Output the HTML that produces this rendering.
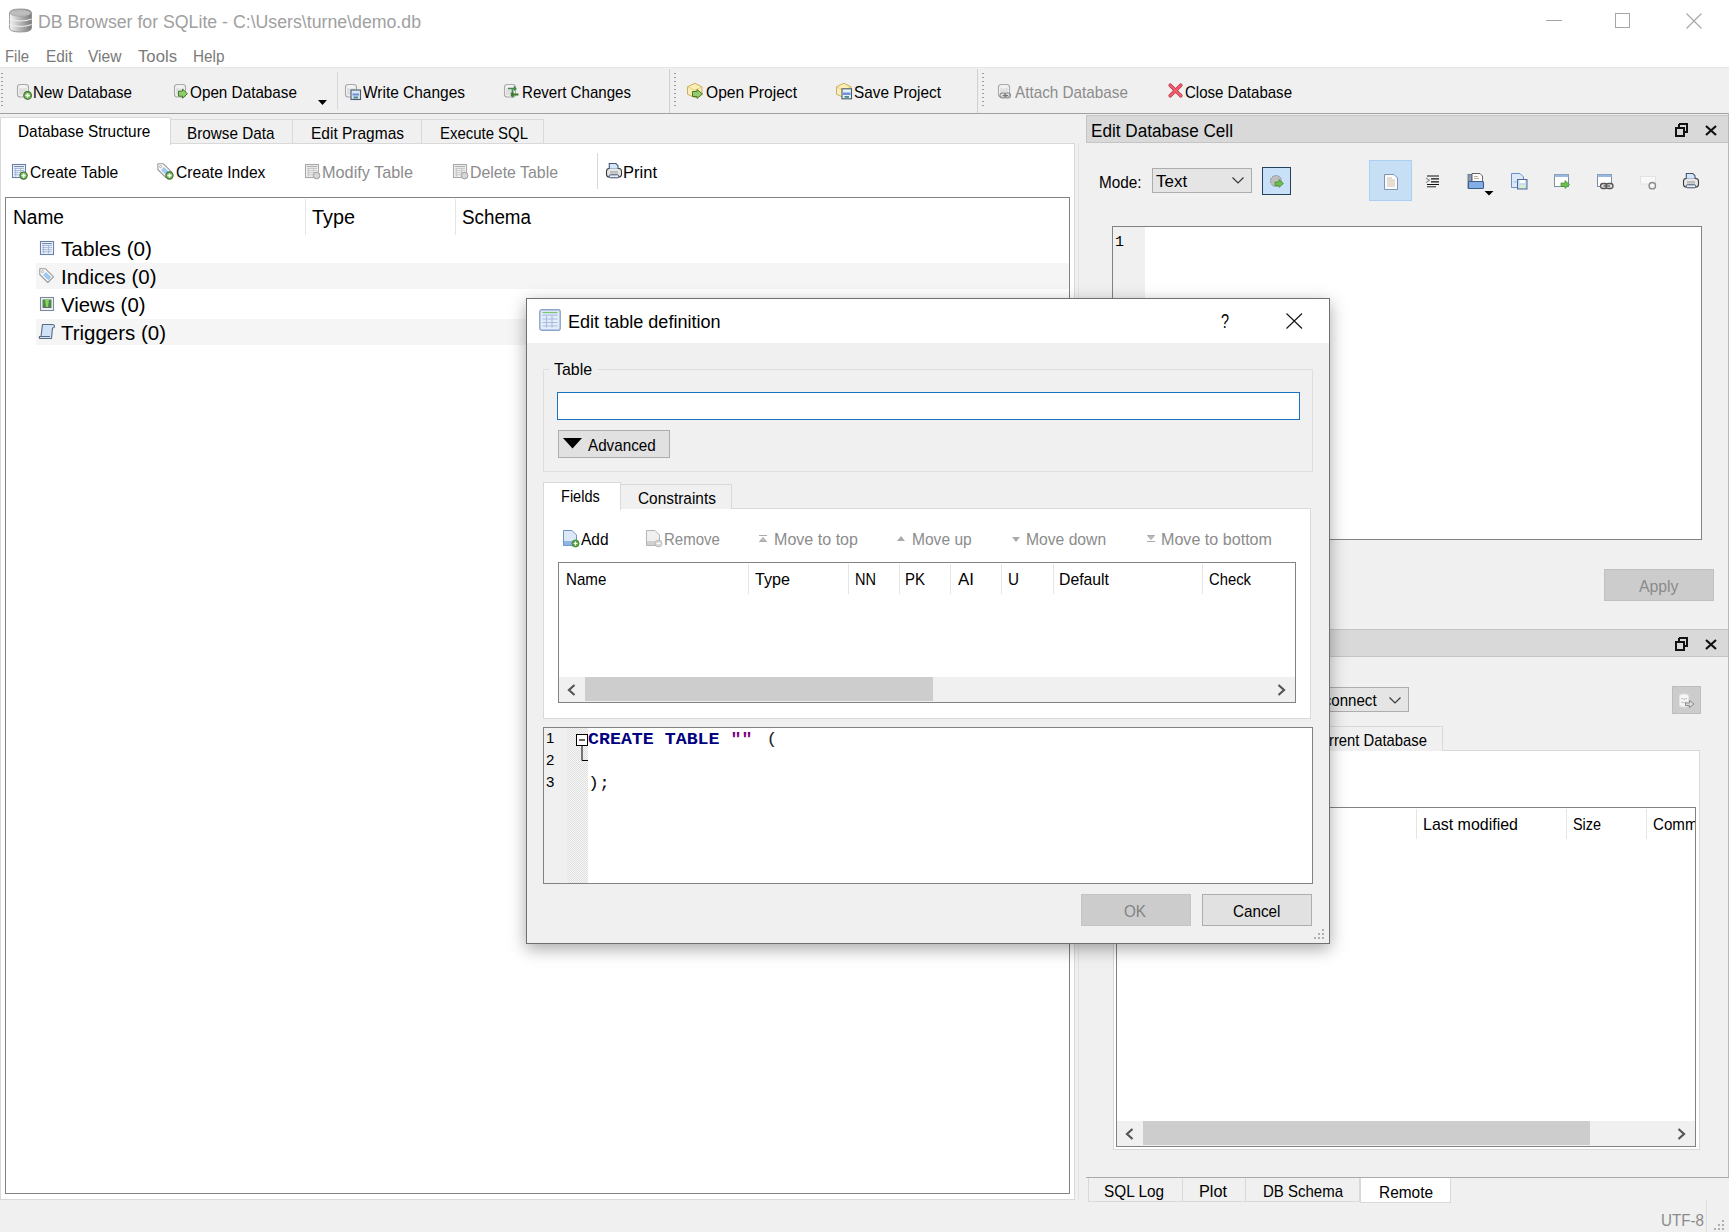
<!DOCTYPE html>
<html><head><meta charset="utf-8">
<style>
*{box-sizing:border-box;margin:0;padding:0}
html,body{width:1729px;height:1232px;overflow:hidden;background:#f0f0f0;font-family:"Liberation Sans",sans-serif;color:#000;position:relative}
.a{position:absolute}
.t{position:absolute;line-height:1;white-space:pre;font-family:"Liberation Sans",sans-serif;transform-origin:0 0}
svg{position:absolute;overflow:visible}
</style></head><body>
<div class="a" style="left:0px;top:0px;width:1729px;height:67px;background:#ffffff;"></div>
<div class="a" style="left:0px;top:67px;width:1729px;height:1px;background:#e6e6e6;"></div>
<svg style="left:8px;top:8px" width="25" height="25" viewBox="0 0 25 25"><defs><linearGradient id="dbg" x1="0" x2="1"><stop offset="0" stop-color="#f4f4f4"/><stop offset="0.35" stop-color="#c8c8c8"/><stop offset="1" stop-color="#7a7a7a"/></linearGradient></defs>
 <path d="M1.5 5 Q1.5 1 12.5 1 Q23.5 1 23.5 5 L23.5 20 Q23.5 24 12.5 24 Q1.5 24 1.5 20 Z" fill="url(#dbg)" stroke="#888" stroke-width="0.8"/>
 <ellipse cx="12.5" cy="5" rx="10.5" ry="3.3" fill="#bdbdbd" stroke="#999" stroke-width="0.6"/>
 <path d="M1.5 11 Q12.5 15 23.5 11" stroke="#eee" stroke-width="1.2" fill="none"/>
 <path d="M1.5 16.5 Q12.5 20.5 23.5 16.5" stroke="#eee" stroke-width="1.2" fill="none"/></svg>
<div class="t" style="left:38px;top:13px;font-size:18px;color:#a0a0a0;transform:scaleX(0.9842);">DB Browser for SQLite - C:\Users\turne\demo.db</div>
<div class="a" style="left:1546px;top:20px;width:16px;height:1px;background:#a6a6a6;"></div>
<div class="a" style="left:1615px;top:13px;width:15px;height:15px;border:1px solid #a6a6a6;"></div>
<svg style="left:1686px;top:13px" width="16" height="16" viewBox="0 0 16 16"><path d="M0.5 0.5 L15.5 15.5 M15.5 0.5 L0.5 15.5" stroke="#a6a6a6" stroke-width="1.1"/></svg>
<div class="t" style="left:5px;top:48px;font-size:17px;color:#7a7a7a;transform:scaleX(0.8757);">File</div>
<div class="t" style="left:45.5px;top:48px;font-size:17px;color:#7a7a7a;transform:scaleX(0.9045);">Edit</div>
<div class="t" style="left:88px;top:48px;font-size:17px;color:#7a7a7a;transform:scaleX(0.9166);">View</div>
<div class="t" style="left:137.5px;top:48px;font-size:17px;color:#7a7a7a;transform:scaleX(0.9827);">Tools</div>
<div class="t" style="left:193px;top:48px;font-size:17px;color:#7a7a7a;transform:scaleX(0.9008);">Help</div>
<div class="a" style="left:0px;top:113px;width:1729px;height:1px;background:#a0a0a0;"></div>
<div class="a" style="left:1px;top:73px;width:2px;height:36px;background:repeating-linear-gradient(#9a9a9a 0 1.5px,transparent 1.5px 4px);"></div>
<div class="a" style="left:337px;top:72px;width:1px;height:38px;background:#d8d8d8;"></div>
<div class="a" style="left:669px;top:69px;width:1px;height:44px;background:#d0d0d0;"></div>
<div class="a" style="left:674px;top:73px;width:2px;height:36px;background:repeating-linear-gradient(#9a9a9a 0 1.5px,transparent 1.5px 4px);"></div>
<div class="a" style="left:977px;top:69px;width:1px;height:44px;background:#d0d0d0;"></div>
<div class="a" style="left:982px;top:73px;width:2px;height:36px;background:repeating-linear-gradient(#9a9a9a 0 1.5px,transparent 1.5px 4px);"></div>
<svg style="left:16px;top:83px" width="18" height="18" viewBox="0 0 18 18"><rect x="1.5" y="1.5" width="11" height="12.5" rx="3" ry="2.6" fill="#f2f2f2" stroke="#a9a9a9" stroke-width="1.1"/><path d="M3 4.5 Q7 6.5 11 4.5 L11 11.5 Q7 13 3 11.5 Z" fill="#d9d9d9" opacity="0.8"/><circle cx="11.6" cy="12.4" r="3.8" fill="#7dbb62" stroke="#3a6a2a" stroke-width="1.1"/><path d="M9.4 12.4 H13.8 M11.6 10.2 V14.6" stroke="#f4fff0" stroke-width="1.5"/></svg>
<div class="t" style="left:33px;top:84px;font-size:17px;color:#000;transform:scaleX(0.8878);">New Database</div>
<svg style="left:173px;top:83px" width="18" height="18" viewBox="0 0 18 18"><rect x="1.5" y="1.5" width="11" height="12.5" rx="3" ry="2.6" fill="#f2f2f2" stroke="#a9a9a9" stroke-width="1.1"/><path d="M3 4.5 Q7 6.5 11 4.5 L11 11.5 Q7 13 3 11.5 Z" fill="#d9d9d9" opacity="0.8"/><path d="M5.5 8.2 H9.5 V6 L14.3 10.8 L9.5 15.2 V13.2 H5.5 Z" fill="#8fcf6a" stroke="#3d7a2a" stroke-width="1"/></svg>
<div class="t" style="left:190px;top:84px;font-size:17px;color:#000;transform:scaleX(0.8985);">Open Database</div>
<svg style="left:318px;top:100px" width="9" height="5" viewBox="0 0 9 5"><path d="M0 0 L9 0 L4.5 5Z" fill="#000"/></svg>
<svg style="left:344px;top:82.5px" width="18" height="18" viewBox="0 0 18 18"><rect x="1.5" y="1.5" width="11" height="12.5" rx="3" ry="2.6" fill="#f2f2f2" stroke="#a9a9a9" stroke-width="1.1"/><path d="M3 4.5 Q7 6.5 11 4.5 L11 11.5 Q7 13 3 11.5 Z" fill="#d9d9d9" opacity="0.8"/><rect x="7" y="7" width="9.5" height="9.5" fill="#d8e6f8" stroke="#4d5a6a" stroke-width="1.1"/><rect x="8.5" y="10.5" width="6.5" height="2" fill="#6f90c8"/><rect x="9.5" y="13.5" width="4.5" height="2" fill="#4a8a8a"/></svg>
<div class="t" style="left:363px;top:84px;font-size:17px;color:#000;transform:scaleX(0.9096);">Write Changes</div>
<svg style="left:503px;top:82.5px" width="18" height="18" viewBox="0 0 18 18"><rect x="1.5" y="1.5" width="11" height="12.5" rx="3" ry="2.6" fill="#f2f2f2" stroke="#a9a9a9" stroke-width="1.1"/><path d="M3 4.5 Q7 6.5 11 4.5 L11 11.5 Q7 13 3 11.5 Z" fill="#d9d9d9" opacity="0.8"/><path d="M5 5.5 H12.5 L11 3.5 M12.5 5.5 L11 7.5" stroke="#4a8a4a" stroke-width="1.6" fill="none"/><path d="M9.5 6 V14.5" stroke="#3d9a5a" stroke-width="1.8"/><path d="M8 11.5 H15.5 M8 11.5 L10 9.5 M8 11.5 L10 13.5" stroke="#3a7a2a" stroke-width="1.8" fill="none"/></svg>
<div class="t" style="left:522px;top:84px;font-size:17px;color:#000;transform:scaleX(0.8873);">Revert Changes</div>
<svg style="left:686px;top:82px" width="19" height="19" viewBox="0 0 19 19"><path d="M8.8 1.3 L16 4.8 L16 12.2 L8.8 15.7 L1.5 12.2 L1.5 4.8 Z" fill="#fbeeb4" stroke="#c9ae62" stroke-width="1"/><path d="M1.5 4.8 L8.8 8.3 L16 4.8 M8.8 8.3 V15.7" stroke="#e0c070" stroke-width="0.7" fill="none"/><path d="M6.5 9.5 H11 V7.5 L16.5 12 L11 16.5 V14.5 H6.5 Z" fill="#93cc70" stroke="#4d7a22" stroke-width="1"/></svg>
<div class="t" style="left:705.5px;top:84px;font-size:17px;color:#000;transform:scaleX(0.9170);">Open Project</div>
<svg style="left:834.5px;top:82px" width="19" height="19" viewBox="0 0 19 19"><path d="M8.8 1.3 L16 4.8 L16 12.2 L8.8 15.7 L1.5 12.2 L1.5 4.8 Z" fill="#fbeeb4" stroke="#c9ae62" stroke-width="1"/><path d="M1.5 4.8 L8.8 8.3 L16 4.8 M8.8 8.3 V15.7" stroke="#e0c070" stroke-width="0.7" fill="none"/><rect x="7" y="6.8" width="9.5" height="10" fill="#e6f4f8" stroke="#4d5a6a" stroke-width="1.1"/><rect x="8" y="10.5" width="7.5" height="2.5" fill="#6f90d8"/><rect x="9.5" y="14" width="4.5" height="1.8" fill="#4a8a8a"/></svg>
<div class="t" style="left:854px;top:84px;font-size:17px;color:#000;transform:scaleX(0.9026);">Save Project</div>
<svg style="left:997px;top:82.5px" width="18" height="18" viewBox="0 0 18 18"><rect x="1.5" y="1.5" width="11" height="12.5" rx="3" ry="2.6" fill="#f2f2f2" stroke="#a9a9a9" stroke-width="1.1"/><path d="M3 4.5 Q7 6.5 11 4.5 L11 11.5 Q7 13 3 11.5 Z" fill="#d9d9d9" opacity="0.8"/><rect x="3" y="10" width="6" height="5" rx="2.4" fill="none" stroke="#8a8a8a" stroke-width="1.1"/><rect x="7.5" y="10" width="6" height="5" rx="2.4" fill="none" stroke="#8a8a8a" stroke-width="1.1"/><path d="M5.5 12.5 H11" stroke="#777" stroke-width="1"/></svg>
<div class="t" style="left:1014.5px;top:84px;font-size:17px;color:#8c8c8c;transform:scaleX(0.8989);">Attach Database</div>
<svg style="left:1167.5px;top:83px" width="15" height="15" viewBox="0 0 15 15"><path d="M2.2 2.2 L12.8 12.8 M12.8 2.2 L2.2 12.8" stroke="#b83a4a" stroke-width="3.6" stroke-linecap="round"/><path d="M2.2 2.2 L12.8 12.8 M12.8 2.2 L2.2 12.8" stroke="#f25c6e" stroke-width="2.2" stroke-linecap="round"/></svg>
<div class="t" style="left:1185px;top:84px;font-size:17px;color:#000;transform:scaleX(0.8845);">Close Database</div>
<div class="a" style="left:170px;top:119px;width:123px;height:25px;background:#f0f0f0;border:1px solid #d9d9d9;border-bottom:none;"></div>
<div class="a" style="left:292px;top:119px;width:130px;height:25px;background:#f0f0f0;border:1px solid #d9d9d9;border-bottom:none;"></div>
<div class="a" style="left:421px;top:119px;width:123px;height:25px;background:#f0f0f0;border:1px solid #d9d9d9;border-bottom:none;"></div>
<div class="a" style="left:0px;top:143px;width:1075px;height:1057px;background:#ffffff;border:1px solid #d9d9d9;"></div>
<div class="a" style="left:0px;top:117px;width:171px;height:28px;background:#ffffff;border:1px solid #d9d9d9;border-bottom:none;"></div>
<div class="t" style="left:18.3px;top:123px;font-size:17px;color:#000;transform:scaleX(0.9033);">Database Structure</div>
<div class="t" style="left:187.4px;top:125px;font-size:17px;color:#000;transform:scaleX(0.8980);">Browse Data</div>
<div class="t" style="left:311px;top:125px;font-size:17px;color:#000;transform:scaleX(0.9113);">Edit Pragmas</div>
<div class="t" style="left:440px;top:125px;font-size:17px;color:#000;transform:scaleX(0.8785);">Execute SQL</div>
<svg style="left:11.0px;top:163.0px" width="17.0" height="17.0" viewBox="0 0 17 17"><rect x="1.5" y="1.5" width="13" height="13" fill="#eef5fd" stroke="#6c7fa6" stroke-width="1.1"/><path d="M3 3.6 H13" stroke="#6c7fa6" stroke-width="1"/><path d="M3 5.5 H13" stroke="#9fb4d6" stroke-width="0.9"/><path d="M3 7.6 H13" stroke="#9fb4d6" stroke-width="0.9"/><path d="M3 9.7 H13" stroke="#9fb4d6" stroke-width="0.9"/><path d="M3 11.8 H13" stroke="#9fb4d6" stroke-width="0.9"/><path d="M4.6 5 V13.5 M9.6 5 V13.5" stroke="#9fb4d6" stroke-width="0.9"/><circle cx="12.6" cy="12.6" r="3.6" fill="#7dbb62" stroke="#3a6a2a" stroke-width="1.1"/><path d="M10.5 12.6 H14.7 M12.6 10.5 V14.7" stroke="#f4fff0" stroke-width="1.5"/></svg>
<div class="t" style="left:29.6px;top:164px;font-size:17px;color:#000;transform:scaleX(0.9189);">Create Table</div>
<svg style="left:156px;top:162px" width="18" height="18" viewBox="0 0 18 18"><path d="M1.8 1.8 H7.5 L15.5 9.8 L9.8 15.5 L1.8 7.5 Z" fill="#f8fbff" stroke="#9a9a9a" stroke-width="1.1" stroke-linejoin="round"/><path d="M8 5.5 L12.8 10.3 L10.3 12.8 L5.5 8 Z" fill="#9ccaf0" stroke="#7fb0dc" stroke-width="0.6"/><circle cx="4.6" cy="4.6" r="1.1" fill="none" stroke="#b0a090" stroke-width="0.8"/><circle cx="13.5" cy="13.5" r="3.6" fill="#7dbb62" stroke="#3a6a2a" stroke-width="1.1"/><path d="M11.4 13.5 H15.6 M13.5 11.4 V15.6" stroke="#f4fff0" stroke-width="1.5"/></svg>
<div class="t" style="left:175.7px;top:164px;font-size:17px;color:#000;transform:scaleX(0.9184);">Create Index</div>
<svg style="left:304.0px;top:163.0px" width="17.0" height="17.0" viewBox="0 0 17 17"><rect x="1.5" y="1.5" width="13" height="13" fill="#f0f0f0" stroke="#a8a8a8" stroke-width="1.1"/><path d="M3 3.6 H13" stroke="#a8a8a8" stroke-width="1"/><path d="M3 5.5 H13" stroke="#c4c4c4" stroke-width="0.9"/><path d="M3 7.6 H13" stroke="#c4c4c4" stroke-width="0.9"/><path d="M3 9.7 H13" stroke="#c4c4c4" stroke-width="0.9"/><path d="M3 11.8 H13" stroke="#c4c4c4" stroke-width="0.9"/><path d="M4.6 5 V13.5 M9.6 5 V13.5" stroke="#c4c4c4" stroke-width="0.9"/><circle cx="12.6" cy="12.6" r="3.3" fill="#d6d6d6" stroke="#a0a0a0" stroke-width="1"/></svg>
<div class="t" style="left:322px;top:164px;font-size:17px;color:#8c8c8c;transform:scaleX(0.9565);">Modify Table</div>
<svg style="left:452.0px;top:163.0px" width="17.0" height="17.0" viewBox="0 0 17 17"><rect x="1.5" y="1.5" width="13" height="13" fill="#f0f0f0" stroke="#a8a8a8" stroke-width="1.1"/><path d="M3 3.6 H13" stroke="#a8a8a8" stroke-width="1"/><path d="M3 5.5 H13" stroke="#c4c4c4" stroke-width="0.9"/><path d="M3 7.6 H13" stroke="#c4c4c4" stroke-width="0.9"/><path d="M3 9.7 H13" stroke="#c4c4c4" stroke-width="0.9"/><path d="M3 11.8 H13" stroke="#c4c4c4" stroke-width="0.9"/><path d="M4.6 5 V13.5 M9.6 5 V13.5" stroke="#c4c4c4" stroke-width="0.9"/><circle cx="12.6" cy="12.6" r="3.3" fill="#d6d6d6" stroke="#a0a0a0" stroke-width="1"/></svg>
<div class="t" style="left:470px;top:164px;font-size:17px;color:#8c8c8c;transform:scaleX(0.9342);">Delete Table</div>
<div class="a" style="left:597px;top:153px;width:1px;height:36px;background:#d8d8d8;"></div>
<svg style="left:605px;top:162px" width="18" height="18" viewBox="0 0 18 18"><rect x="1.5" y="6.5" width="15" height="8.5" rx="2.8" fill="#e6e6e6" stroke="#3a3a3a" stroke-width="1.1"/><path d="M4.3 6.8 V1.5 H10.8 L13 3.7 V6.8" fill="#d4e8fb" stroke="#46566c" stroke-width="1.1"/><rect x="5" y="9" width="8" height="2.6" fill="#bdbdbd"/><rect x="4.3" y="12.8" width="9.4" height="3" rx="1" fill="#e4f0fb" stroke="#46566c" stroke-width="1"/></svg>
<div class="t" style="left:623px;top:164px;font-size:17px;color:#000;transform:scaleX(0.9723);">Print</div>
<div class="a" style="left:5px;top:197px;width:1065px;height:997px;background:#ffffff;border:1px solid #828282;"></div>
<div class="a" style="left:305px;top:199px;width:1px;height:36px;background:#e5e5e5;"></div>
<div class="a" style="left:455px;top:199px;width:1px;height:36px;background:#e5e5e5;"></div>
<div class="t" style="left:12.6px;top:207px;font-size:20px;color:#000;transform:scaleX(0.9558);">Name</div>
<div class="t" style="left:312px;top:207px;font-size:20px;color:#000;transform:scaleX(0.9917);">Type</div>
<div class="t" style="left:462px;top:207px;font-size:20px;color:#000;transform:scaleX(0.9404);">Schema</div>
<div class="a" style="left:36px;top:263px;width:1033px;height:26px;background:#f5f5f5;"></div>
<div class="a" style="left:36px;top:319px;width:1033px;height:26px;background:#f5f5f5;"></div>
<svg style="left:39.0px;top:240.0px" width="17.0" height="17.0" viewBox="0 0 17 17"><rect x="1.5" y="1.5" width="13" height="13" fill="#eef5fd" stroke="#6c7fa6" stroke-width="1.1"/><path d="M3 3.6 H13" stroke="#6c7fa6" stroke-width="1"/><path d="M3 5.5 H13" stroke="#9fb4d6" stroke-width="0.9"/><path d="M3 7.6 H13" stroke="#9fb4d6" stroke-width="0.9"/><path d="M3 9.7 H13" stroke="#9fb4d6" stroke-width="0.9"/><path d="M3 11.8 H13" stroke="#9fb4d6" stroke-width="0.9"/><path d="M4.6 5 V13.5 M9.6 5 V13.5" stroke="#9fb4d6" stroke-width="0.9"/></svg>
<svg style="left:38px;top:267px" width="18" height="18" viewBox="0 0 18 18"><path d="M1.8 1.8 H7.5 L15.5 9.8 L9.8 15.5 L1.8 7.5 Z" fill="#f8fbff" stroke="#9a9a9a" stroke-width="1.1" stroke-linejoin="round"/><path d="M8 5.5 L12.8 10.3 L10.3 12.8 L5.5 8 Z" fill="#9ccaf0" stroke="#7fb0dc" stroke-width="0.6"/><circle cx="4.6" cy="4.6" r="1.1" fill="none" stroke="#b0a090" stroke-width="0.8"/></svg>
<svg style="left:39px;top:296px" width="16" height="16" viewBox="0 0 16 16"><rect x="1.5" y="1.5" width="13" height="13" fill="#eef3f8" stroke="#7f8a98" stroke-width="1.1"/><rect x="3.5" y="3.5" width="9" height="7.5" fill="#4f8a4a"/><path d="M6 3.5 H10 L9 11 H7 Z" fill="#8fd060"/><path d="M3.5 11.5 H12.5" stroke="#555" stroke-width="0.9"/></svg>
<svg style="left:38px;top:323px" width="18" height="18" viewBox="0 0 18 18"><path d="M4.5 1.5 H14.5 Q16.5 1.5 16.5 3.5 Q16.5 5 14.5 5 L13.5 15.5 H2 Q1 15.5 1.5 13.5 L3 13.5 Z" fill="#cfe2f8" stroke="#5a6a80" stroke-width="1.1" stroke-linejoin="round"/><path d="M1.5 13.5 H12" stroke="#5a6a80" stroke-width="1"/></svg>
<div class="t" style="left:61.3px;top:238px;font-size:21px;color:#000;transform:scaleX(0.9870);">Tables (0)</div>
<div class="t" style="left:61.3px;top:266px;font-size:21px;color:#000;transform:scaleX(0.9740);">Indices (0)</div>
<div class="t" style="left:61.3px;top:293.5px;font-size:21px;color:#000;transform:scaleX(0.9697);">Views (0)</div>
<div class="t" style="left:61.3px;top:321.7px;font-size:21px;color:#000;transform:scaleX(0.9745);">Triggers (0)</div>
<div class="a" style="left:1078px;top:143px;width:1px;height:1057px;background:#e3e3e3;"></div>
<div class="a" style="left:1086px;top:115px;width:643px;height:28px;background:#d9d9d9;border:1px solid #c4c4c4;"></div>
<div class="t" style="left:1091px;top:122px;font-size:18px;color:#000;transform:scaleX(0.9524);">Edit Database Cell</div>
<svg style="left:1675px;top:123px" width="13" height="14" viewBox="0 0 13 14"><path d="M4 1 H12 V9 H10 M4 1 V4" stroke="#111" stroke-width="2" fill="none"/><rect x="1" y="5" width="8" height="8" fill="none" stroke="#111" stroke-width="2"/></svg>
<svg style="left:1705px;top:125px" width="12" height="11" viewBox="0 0 12 11"><path d="M1 1 L11 10 M11 1 L1 10" stroke="#111" stroke-width="2.2"/></svg>
<div class="t" style="left:1099.2px;top:174px;font-size:17px;color:#000;transform:scaleX(0.9016);">Mode:</div>
<div class="a" style="left:1152px;top:168px;width:100px;height:25px;background:#e5e5e5;border:1px solid #adadad;"></div>
<div class="t" style="left:1156px;top:173px;font-size:17px;color:#000;">Text</div>
<svg style="left:1232px;top:177px" width="12" height="7" viewBox="0 0 12 7"><path d="M0.5 0.5 L6 6 L11.5 0.5" stroke="#333" stroke-width="1.1" fill="none"/></svg>
<div class="a" style="left:1262px;top:167px;width:29px;height:28px;background:#c9e1f8;border:1px solid #24415e;"></div>
<svg style="left:1268px;top:173px" width="18" height="16" viewBox="0 0 18 16"><circle cx="8" cy="8" r="5.5" fill="#bdbdbd" stroke="#8a8a8a" stroke-dasharray="2 1"/><path d="M7 9 H11 V6.5 L15.5 10.5 L11 14.5 V12.5 H7 Z" fill="#6cbf4e" stroke="#3d8a2e" stroke-width="0.7"/></svg>
<div class="a" style="left:1369px;top:160px;width:43px;height:41px;background:#c6dff5;border:1px solid #a9d0f2;"></div>
<svg style="left:1384px;top:174px" width="14" height="16" viewBox="0 0 14 16"><path d="M0.5 0.5 H10 L13.5 4 V15.5 H0.5 Z" fill="#fafcff" stroke="#7f92b0"/><path d="M3 4 H8 M3 6 H11 M3 8 H11 M3 10 H11 M3 12 H11" stroke="#c8b08a" stroke-width="0.8"/></svg>
<svg style="left:1426px;top:175px" width="14" height="13" viewBox="0 0 14 13"><path d="M1 1 H13 M5 3.8 H13 M5 6.8 H13 M1 9.5 H13" stroke="#111" stroke-width="1.2"/><path d="M1 11.8 H10" stroke="#111" stroke-width="0.9"/><path d="M0 3 L3.5 5.3 L0 7.6" stroke="#888" stroke-width="1.1" fill="none"/></svg>
<svg style="left:1467px;top:172px" width="28" height="24" viewBox="0 0 28 24"><rect x="1" y="2.5" width="4" height="14" fill="#8a9ab0" stroke="#5a6a80" stroke-width="0.8"/><path d="M5 1.5 H13 L15.5 4 V10 H5 Z" fill="#fafafa" stroke="#555" stroke-width="0.9"/><path d="M7 4.5 H11 M7 6.5 H12" stroke="#a09070" stroke-width="0.7"/><rect x="1.5" y="9.5" width="15" height="7" rx="1" fill="#84aee6" stroke="#3c5f8f" stroke-width="1.1"/><path d="M17.5 19 H26.5 L22 23.5 Z" fill="#000"/></svg>
<svg style="left:1510px;top:172px" width="19" height="18" viewBox="0 0 19 18"><path d="M1.5 1.5 H10 L13.5 5 V15.5 H1.5 Z" fill="#dde9f8" stroke="#6a8fc2" stroke-width="1"/><path d="M3.5 10 H7" stroke="#8fb0d8" stroke-width="0.8"/><rect x="7.5" y="7.5" width="9.5" height="9.5" fill="#c8dcf4" stroke="#4a6a98" stroke-width="1"/><rect x="9.5" y="8" width="5.5" height="3" fill="#fff"/><rect x="9.5" y="13" width="5.5" height="3" fill="#d8f0c8"/></svg>
<svg style="left:1554px;top:174px" width="17" height="16" viewBox="0 0 17 16"><rect x="0.5" y="0.5" width="14" height="12" fill="#fff" stroke="#7a8ea8"/><rect x="0.5" y="0.5" width="14" height="2.5" fill="#9bb8de"/><path d="M7 9 H11 V6.5 L15.5 10.5 L11 14.5 V12.5 H7 Z" fill="#6cbf4e" stroke="#3d8a2e" stroke-width="0.7"/></svg>
<svg style="left:1597px;top:174px" width="17" height="16" viewBox="0 0 17 16"><rect x="0.5" y="0.5" width="14" height="12" fill="#fff" stroke="#7a8ea8"/><rect x="0.5" y="0.5" width="14" height="2.5" fill="#9bb8de"/><rect x="3.5" y="9.5" width="7" height="5" rx="2.5" fill="#ddd" stroke="#555" stroke-width="1.3"/><rect x="9" y="9.5" width="7" height="5" rx="2.5" fill="#ddd" stroke="#555" stroke-width="1.3"/><path d="M6.5 12 H13" stroke="#555" stroke-width="1.2"/></svg>
<svg style="left:1640px;top:176px" width="18" height="15" viewBox="0 0 18 15"><rect x="0.5" y="0.5" width="15" height="7.5" fill="#f8f8f8" stroke="#e2e2e2"/><circle cx="12.3" cy="9.7" r="3.2" fill="#eee" stroke="#8a8a8a" stroke-width="1.4"/><path d="M10.8 9.3 H13.8" stroke="#fff" stroke-width="1.2"/></svg>
<svg style="left:1682px;top:172px" width="18" height="18" viewBox="0 0 18 18"><rect x="1.5" y="6.5" width="15" height="8.5" rx="2.8" fill="#e6e6e6" stroke="#3a3a3a" stroke-width="1.1"/><path d="M4.3 6.8 V1.5 H10.8 L13 3.7 V6.8" fill="#d4e8fb" stroke="#46566c" stroke-width="1.1"/><rect x="5" y="9" width="8" height="2.6" fill="#bdbdbd"/><rect x="4.3" y="12.8" width="9.4" height="3" rx="1" fill="#e4f0fb" stroke="#46566c" stroke-width="1"/></svg>
<div class="a" style="left:1112px;top:226px;width:590px;height:314px;background:#ffffff;border:1px solid #828282;"></div>
<div class="a" style="left:1113px;top:227px;width:32px;height:312px;background:#f0f0f0;"></div>
<div class="t" style="left:1115px;top:235px;font-size:15px;color:#000;font-family:'Liberation Mono',monospace;">1</div>
<div class="a" style="left:1604px;top:569px;width:110px;height:32px;background:#cccccc;border:1px solid #c0c0c0;"></div>
<div class="t" style="left:1639px;top:578px;font-size:17px;color:#8a8a8a;transform:scaleX(0.9287);">Apply</div>
<div class="a" style="left:1086px;top:629px;width:643px;height:28px;background:#d9d9d9;border:1px solid #c4c4c4;"></div>
<svg style="left:1675px;top:637px" width="13" height="14" viewBox="0 0 13 14"><path d="M4 1 H12 V9 H10 M4 1 V4" stroke="#111" stroke-width="2" fill="none"/><rect x="1" y="5" width="8" height="8" fill="none" stroke="#111" stroke-width="2"/></svg>
<svg style="left:1705px;top:639px" width="12" height="11" viewBox="0 0 12 11"><path d="M1 1 L11 10 M11 1 L1 10" stroke="#111" stroke-width="2.2"/></svg>
<div class="a" style="left:1300px;top:687px;width:109px;height:25px;background:#e5e5e5;border:1px solid #adadad;"></div>
<div class="t" style="left:1302px;top:692px;font-size:17px;color:#000;transform:scaleX(0.8869);">Disconnect</div>
<svg style="left:1389px;top:697px" width="12" height="7" viewBox="0 0 12 7"><path d="M0.5 0.5 L6 6 L11.5 0.5" stroke="#333" stroke-width="1.1" fill="none"/></svg>
<div class="a" style="left:1672px;top:686px;width:29px;height:28px;background:#cccccc;border:1px solid #bdbdbd;"></div>
<svg style="left:1678px;top:693px" width="18" height="16" viewBox="0 0 18 16"><path d="M1.5 3 Q1.5 1 6 1 Q10.5 1 10.5 3 V12 Q10.5 14 6 14 Q1.5 14 1.5 12 Z" fill="#f6f6f6" stroke="#e4e4e4"/><path d="M3 5.5 Q6 7 9 5.5 M3 9 Q6 10.5 9 9" stroke="#b8b8b8" stroke-width="0.9" fill="none"/><path d="M7.5 10 H11.5 V7.5 L16 11 L11.5 14.5 V12.5 H7.5 Z" fill="#dcdcdc" stroke="#8a8a8a" stroke-width="1"/></svg>
<div class="a" style="left:1113px;top:750px;width:587px;height:400px;background:#ffffff;border:1px solid #d9d9d9;"></div>
<div class="a" style="left:1300px;top:726px;width:143px;height:25px;background:#f0f0f0;border:1px solid #d9d9d9;border-bottom:none;"></div>
<div class="t" style="left:1310px;top:732px;font-size:17px;color:#000;transform:scaleX(0.8719);">Current Database</div>
<div class="a" style="left:1116px;top:807px;width:580px;height:340px;background:#ffffff;border:1px solid #828282;"></div>
<div class="a" style="left:1416px;top:809px;width:1px;height:30px;background:#e5e5e5;"></div>
<div class="a" style="left:1566px;top:809px;width:1px;height:30px;background:#e5e5e5;"></div>
<div class="a" style="left:1646px;top:809px;width:1px;height:30px;background:#e5e5e5;"></div>
<div class="t" style="left:1423px;top:816px;font-size:17px;color:#000;transform:scaleX(0.9394);">Last modified</div>
<div class="t" style="left:1573px;top:816px;font-size:17px;color:#000;transform:scaleX(0.8465);">Size</div>
<div class="a" style="left:1646px;top:809px;width:49px;height:30px;overflow:hidden"><div class="t" style="left:7px;top:7px;font-size:17px;transform:scaleX(0.89)">Comment</div></div>
<div class="a" style="left:1117px;top:1121px;width:578px;height:25px;background:#f0f0f0;"></div>
<div class="a" style="left:1143px;top:1121px;width:447px;height:24px;background:#cdcdcd;"></div>
<svg style="left:1125px;top:1128px" width="9" height="12" viewBox="0 0 9 12"><path d="M7.5 1 L2 6 L7.5 11" stroke="#555" stroke-width="2.2" fill="none"/></svg>
<svg style="left:1677px;top:1128px" width="9" height="12" viewBox="0 0 9 12"><path d="M1.5 1 L7 6 L1.5 11" stroke="#555" stroke-width="2.2" fill="none"/></svg>
<div class="a" style="left:1728px;top:113px;width:1px;height:1065px;background:#b8b8b8;"></div>
<div class="a" style="left:1088px;top:1177px;width:95px;height:25px;background:#f0f0f0;border:1px solid #d9d9d9;border-top:none;"></div>
<div class="a" style="left:1182px;top:1177px;width:64px;height:25px;background:#f0f0f0;border:1px solid #d9d9d9;border-top:none;"></div>
<div class="a" style="left:1245px;top:1177px;width:115px;height:25px;background:#f0f0f0;border:1px solid #d9d9d9;border-top:none;"></div>
<div class="a" style="left:1360px;top:1178px;width:91px;height:25px;background:#ffffff;border:1px solid #d9d9d9;border-top:none;"></div>
<div class="a" style="left:1086px;top:1177px;width:643px;height:1px;background:#ababab;"></div>
<div class="t" style="left:1103.6px;top:1183px;font-size:17px;color:#000;transform:scaleX(0.9025);">SQL Log</div>
<div class="t" style="left:1199px;top:1183px;font-size:17px;color:#000;transform:scaleX(0.9557);">Plot</div>
<div class="t" style="left:1263px;top:1183px;font-size:17px;color:#000;transform:scaleX(0.8820);">DB Schema</div>
<div class="t" style="left:1379px;top:1183.5px;font-size:17px;color:#000;transform:scaleX(0.9071);">Remote</div>
<div class="t" style="left:1661px;top:1212px;font-size:17px;color:#8a8a8a;transform:scaleX(0.8926);">UTF-8</div>
<div class="a" style="left:1706px;top:1200px;width:1px;height:32px;background:#dcdcdc;"></div>
<svg style="left:1712px;top:1218px" width="14" height="14" viewBox="0 0 14 14"><g fill="#b0b0b0"><rect x="10" y="2" width="2" height="2"/><rect x="6" y="6" width="2" height="2"/><rect x="10" y="6" width="2" height="2"/><rect x="2" y="10" width="2" height="2"/><rect x="6" y="10" width="2" height="2"/><rect x="10" y="10" width="2" height="2"/></g></svg>
<div class="a" style="left:526px;top:298px;width:804px;height:646px;box-shadow:0 5px 16px rgba(0,0,0,0.34);background:#f0f0f0;border:1px solid #6f6f6f"></div>
<div class="a" style="left:527px;top:299px;width:802px;height:44px;background:#ffffff;"></div>
<svg style="left:539px;top:309px" width="22" height="22" viewBox="0 0 22 22"><rect x="0.8" y="0.8" width="20.4" height="20.4" rx="2" fill="#e4edf9" stroke="#8aa4cc" stroke-width="1.4"/><path d="M3.5 3.5 H18.5" stroke="#7cc46a" stroke-width="1.2"/><path d="M3.5 6.5 H18.5 M3.5 10 H18.5 M3.5 13.5 H18.5 M3.5 17 H18.5 M7.5 6.5 V18.5 M13 6.5 V18.5" stroke="#a8bde0" stroke-width="1.1"/><rect x="3.5" y="4.5" width="15" height="2" fill="#c8d8f0"/></svg>
<div class="t" style="left:567.8px;top:313px;font-size:18px;color:#000;transform:scaleX(1.0032);">Edit table definition</div>
<div class="t" style="left:1220.5px;top:310px;font-size:21px;color:#000;transform:scaleX(0.6845);">?</div>
<svg style="left:1286px;top:313px" width="17" height="16" viewBox="0 0 17 16"><path d="M0.5 0.5 L16 15.5 M16 0.5 L0.5 15.5" stroke="#111" stroke-width="1.1"/></svg>
<div class="a" style="left:543px;top:369px;width:770px;height:103px;border:1px solid #dedede;"></div>
<div class="a" style="left:549px;top:360px;width:48px;height:14px;background:#f0f0f0;"></div>
<div class="t" style="left:553.6px;top:361px;font-size:17px;color:#000;transform:scaleX(0.9375);">Table</div>
<div class="a" style="left:557px;top:392px;width:743px;height:28px;background:#ffffff;border:1px solid #1a72c2;"></div>
<div class="a" style="left:558px;top:430px;width:112px;height:28px;background:#e1e1e1;border:1px solid #adadad;"></div>
<svg style="left:563px;top:438px" width="19" height="11" viewBox="0 0 19 11"><path d="M0 0 H19 L9.5 10.5 Z" fill="#000"/></svg>
<div class="t" style="left:588px;top:437px;font-size:17px;color:#000;transform:scaleX(0.8952);">Advanced</div>
<div class="a" style="left:543px;top:508px;width:768px;height:211px;background:#ffffff;border:1px solid #d9d9d9;"></div>
<div class="a" style="left:620px;top:484px;width:112px;height:25px;background:#f0f0f0;border:1px solid #d9d9d9;border-bottom:none;"></div>
<div class="a" style="left:543px;top:482px;width:78px;height:28px;background:#ffffff;border:1px solid #d9d9d9;border-bottom:none;"></div>
<div class="t" style="left:561.4px;top:488px;font-size:17px;color:#000;transform:scaleX(0.8554);">Fields</div>
<div class="t" style="left:637.6px;top:490px;font-size:17px;color:#000;transform:scaleX(0.9060);">Constraints</div>
<svg style="left:563px;top:530px" width="17" height="18" viewBox="0 0 17 18"><path d="M0.5 0.5 H9 L13.5 5 V15.5 H0.5 Z" fill="#dce8f8" stroke="#6f93c4"/><rect x="1" y="11" width="12" height="4" fill="#8fb6e6"/><circle cx="12.5" cy="13.5" r="3.6" fill="#5aa64a" stroke="#2f7a2a" stroke-width="0.7"/><path d="M10.6 13.5 H14.4 M12.5 11.6 V15.4" stroke="#fff" stroke-width="1.2"/></svg>
<div class="t" style="left:581.2px;top:531px;font-size:17px;color:#000;transform:scaleX(0.9091);">Add</div>
<svg style="left:646px;top:530px" width="17" height="18" viewBox="0 0 17 18"><path d="M0.5 0.5 H9 L13.5 5 V15.5 H0.5 Z" fill="#f0f0f0" stroke="#b5b5b5"/><rect x="1" y="11" width="12" height="4" fill="#d0d0d0"/><circle cx="12.5" cy="13.5" r="3.4" fill="#d8d8d8" stroke="#aaa" stroke-width="0.7"/><path d="M10.6 13.5 H14.4" stroke="#fff" stroke-width="1.2"/></svg>
<div class="t" style="left:663.7px;top:531px;font-size:17px;color:#8c8c8c;transform:scaleX(0.8813);">Remove</div>
<svg style="left:759px;top:535px" width="8" height="7" viewBox="0 0 8 7"><path d="M0 0.5 H8 M0.5 6.5 L4 2.5 L7.5 6.5 Z" stroke="#aaa" fill="#bbb"/></svg>
<div class="t" style="left:773.7px;top:531px;font-size:17px;color:#8c8c8c;transform:scaleX(0.9456);">Move to top</div>
<svg style="left:897px;top:536px" width="8" height="5" viewBox="0 0 8 5"><path d="M0 5 L4 0 L8 5 Z" fill="#aaa"/></svg>
<div class="t" style="left:912px;top:531px;font-size:17px;color:#8c8c8c;transform:scaleX(0.9156);">Move up</div>
<svg style="left:1012px;top:537px" width="8" height="5" viewBox="0 0 8 5"><path d="M0 0 L4 5 L8 0 Z" fill="#aaa"/></svg>
<div class="t" style="left:1025.9px;top:531px;font-size:17px;color:#8c8c8c;transform:scaleX(0.9214);">Move down</div>
<svg style="left:1147px;top:535px" width="8" height="7" viewBox="0 0 8 7"><path d="M0 6.5 H8 M0.5 0.5 L4 4.5 L7.5 0.5 Z" stroke="#aaa" fill="#bbb"/></svg>
<div class="t" style="left:1161px;top:531px;font-size:17px;color:#8c8c8c;transform:scaleX(0.9473);">Move to bottom</div>
<div class="a" style="left:558px;top:562px;width:738px;height:141px;background:#ffffff;border:1px solid #828282;"></div>
<div class="a" style="left:748px;top:564px;width:1px;height:30px;background:#e5e5e5;"></div>
<div class="a" style="left:848px;top:564px;width:1px;height:30px;background:#e5e5e5;"></div>
<div class="a" style="left:899px;top:564px;width:1px;height:30px;background:#e5e5e5;"></div>
<div class="a" style="left:950px;top:564px;width:1px;height:30px;background:#e5e5e5;"></div>
<div class="a" style="left:1001px;top:564px;width:1px;height:30px;background:#e5e5e5;"></div>
<div class="a" style="left:1053px;top:564px;width:1px;height:30px;background:#e5e5e5;"></div>
<div class="a" style="left:1202px;top:564px;width:1px;height:30px;background:#e5e5e5;"></div>
<div class="t" style="left:565.6px;top:571px;font-size:17px;color:#000;transform:scaleX(0.8885);">Name</div>
<div class="t" style="left:755px;top:571px;font-size:17px;color:#000;transform:scaleX(0.9496);">Type</div>
<div class="t" style="left:855px;top:571px;font-size:17px;color:#000;transform:scaleX(0.8550);">NN</div>
<div class="t" style="left:905px;top:571px;font-size:17px;color:#000;transform:scaleX(0.8815);">PK</div>
<div class="t" style="left:958px;top:571px;font-size:17px;color:#000;transform:scaleX(0.9961);">AI</div>
<div class="t" style="left:1008px;top:571px;font-size:17px;color:#000;transform:scaleX(0.8957);">U</div>
<div class="t" style="left:1059px;top:571px;font-size:17px;color:#000;transform:scaleX(0.9281);">Default</div>
<div class="t" style="left:1209px;top:571px;font-size:17px;color:#000;transform:scaleX(0.8716);">Check</div>
<div class="a" style="left:559px;top:677px;width:736px;height:25px;background:#f0f0f0;"></div>
<div class="a" style="left:585px;top:677px;width:348px;height:24px;background:#cdcdcd;"></div>
<svg style="left:567px;top:684px" width="9" height="12" viewBox="0 0 9 12"><path d="M7.5 1 L2 6 L7.5 11" stroke="#555" stroke-width="2.2" fill="none"/></svg>
<svg style="left:1277px;top:684px" width="9" height="12" viewBox="0 0 9 12"><path d="M1.5 1 L7 6 L1.5 11" stroke="#555" stroke-width="2.2" fill="none"/></svg>
<div class="a" style="left:543px;top:727px;width:770px;height:157px;background:#ffffff;border:1px solid #828282;"></div>
<div class="a" style="left:544px;top:728px;width:23px;height:155px;background:#f0f0f0;"></div>
<div class="a" style="left:567px;top:728px;width:21px;height:155px;background:repeating-conic-gradient(#e0e0e0 0 25%, #f6f6f6 0 50%) 0 0/2px 2px;"></div>
<div class="t" style="left:546px;top:730px;font-size:15px;color:#000;">1</div>
<div class="t" style="left:546px;top:752px;font-size:15px;color:#000;">2</div>
<div class="t" style="left:546px;top:774px;font-size:15px;color:#000;">3</div>
<svg style="left:575px;top:733px" width="14" height="30" viewBox="0 0 14 30"><rect x="1.5" y="1.5" width="11" height="11" fill="#fff" stroke="#000"/><path d="M4 7 H10" stroke="#000" stroke-width="1.2"/><path d="M7 12.5 V27.5 H13" stroke="#000" fill="none"/></svg>
<div class="t" style="left:588.3px;top:731px;font-size:17px;font-family:'Liberation Mono',monospace;transform:scaleX(1.0742)"><b style="color:#000080">CREATE TABLE</b> <b style="color:#7f007f">&quot;&quot;</b> <span style="color:#222;padding-left:3px">(</span></div>
<div class="t" style="left:588.3px;top:775px;font-size:17px;font-family:'Liberation Mono',monospace;transform:scaleX(1.0742);color:#111">);</div>
<div class="a" style="left:1081px;top:894px;width:110px;height:32px;background:#cccccc;border:1px solid #c4c4c4;"></div>
<div class="t" style="left:1124px;top:903px;font-size:17px;color:#838383;transform:scaleX(0.8957);">OK</div>
<div class="a" style="left:1202px;top:894px;width:110px;height:32px;background:#e1e1e1;border:1px solid #adadad;"></div>
<div class="t" style="left:1232.5px;top:903px;font-size:17px;color:#000;transform:scaleX(0.8975);">Cancel</div>
<svg style="left:1314px;top:928px" width="12" height="12" viewBox="0 0 12 12"><g fill="#b0b0b0"><rect x="8" y="1" width="2" height="2"/><rect x="4" y="5" width="2" height="2"/><rect x="8" y="5" width="2" height="2"/><rect x="0" y="9" width="2" height="2"/><rect x="4" y="9" width="2" height="2"/><rect x="8" y="9" width="2" height="2"/></g></svg>
</body></html>
